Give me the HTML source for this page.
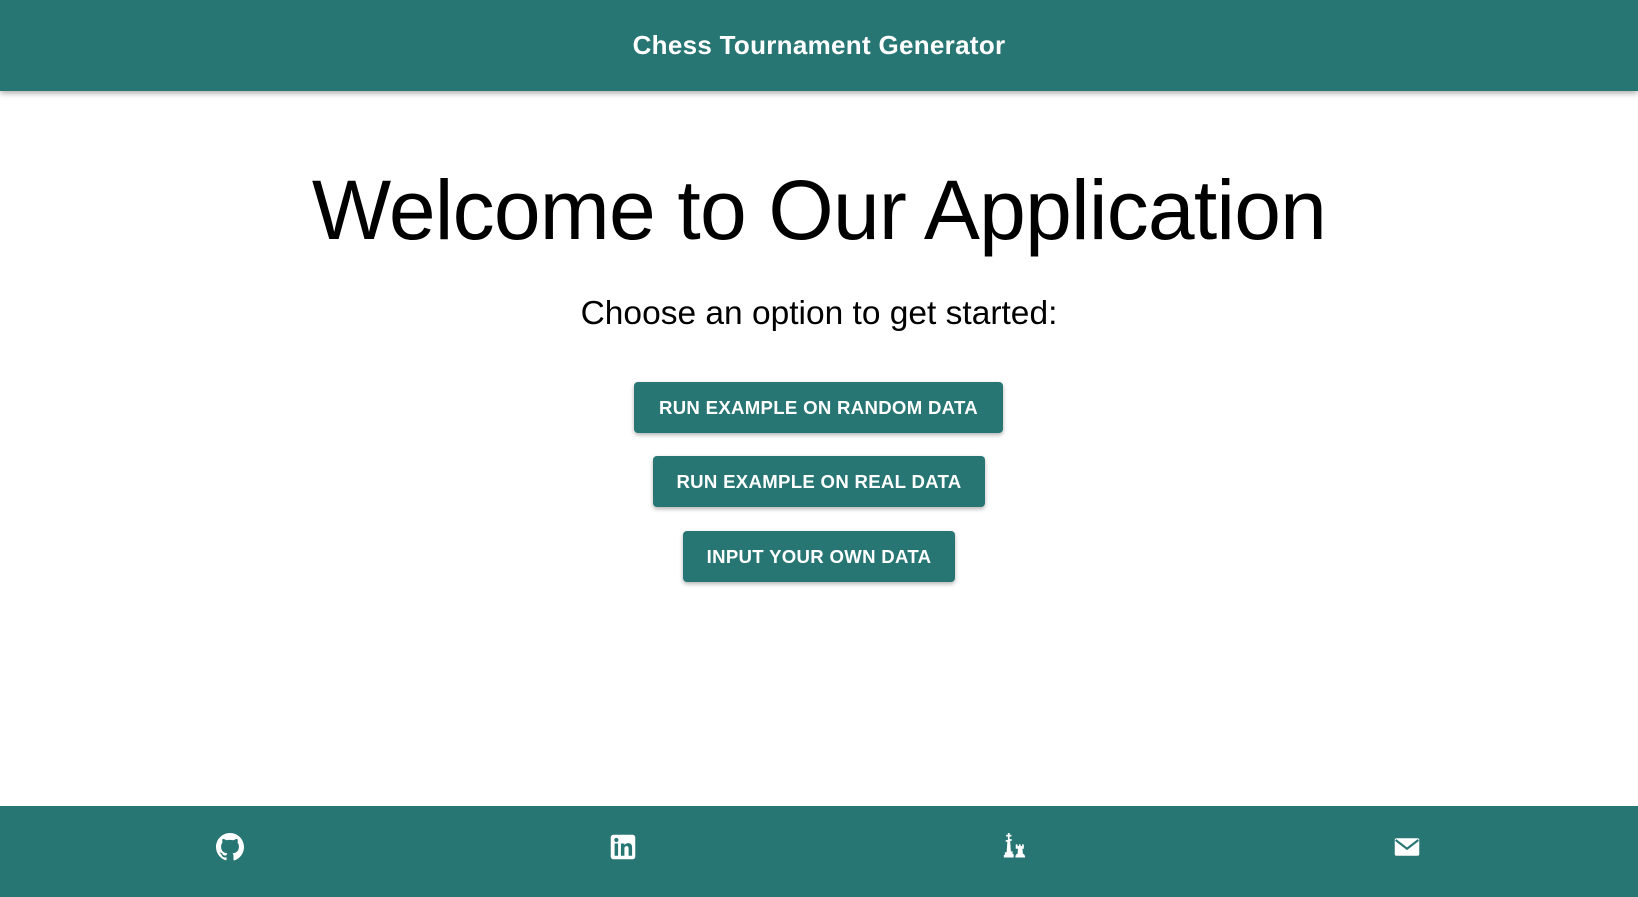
<!DOCTYPE html>
<html><head><meta charset="utf-8"><style>
body{margin:0;width:1638px;height:897px;position:relative;background:#fff;font-family:"Liberation Sans",sans-serif;overflow:hidden}
.hdr{position:absolute;left:0;top:0;width:1638px;height:91px;background:#277674;box-shadow:0 2px 6px rgba(0,0,0,.35);color:#fff;font-size:26px;font-weight:bold;text-align:center;line-height:91px;letter-spacing:.3px}
h1{position:absolute;left:0;width:1638px;top:160px;margin:0;text-align:center;font-weight:normal;font-size:84px;line-height:100px;color:#000;letter-spacing:-0.8px}
.sub{position:absolute;left:0;width:1638px;top:295px;text-align:center;font-size:33.5px;color:#000}
.btn{position:absolute;background:#277674;color:#fff;font-weight:bold;font-size:18.6px;text-align:center;border-radius:4px;box-shadow:0 2px 4px rgba(0,0,0,.3);height:51px;line-height:51px;letter-spacing:.3px}
.ftr{position:absolute;left:0;top:806px;width:1638px;height:91px;background:#277674}
.ic{position:absolute;top:833px;width:28px;height:28px}
</style></head><body>
<div class="hdr">Chess Tournament Generator</div>
<h1>Welcome to Our Application</h1>
<div class="sub">Choose an option to get started:</div>
<div class="btn" style="left:634px;top:382px;width:369px">RUN EXAMPLE ON RANDOM DATA</div>
<div class="btn" style="left:653px;top:456px;width:332px">RUN EXAMPLE ON REAL DATA</div>
<div class="btn" style="left:683px;top:531px;width:272px">INPUT YOUR OWN DATA</div>
<div class="ftr"></div>
<svg class="ic" style="left:216px" viewBox="0 0 16 16"><path fill="#fff" d="M8 0C3.58 0 0 3.580 0 8c0 3.54 2.29 6.53 5.47 7.59.4.07.55-.17.55-.38v-1.33c-2.230.48-2.7-1.07-2.7-1.07-.36-.92-.89-1.17-.89-1.17-.73-.5.05-.49.05-.49.8.06 1.23.83 1.23.83.72 1.22 1.870.87 2.33.66.07-.52.28-.87.5-1.07-1.78-.2-3.64-.89-3.64-3.95 0-.87.31-1.59.82-2.15-.08-.2-.36-1.020.08-2.12 0 0 .67-.21 2.2.82a7.6 7.6 0 014 0c1.53-1.04 2.2-.82 2.2-.82.44 1.1.16 1.92.08 2.12.51.56.82 1.27.82 2.15 0 3.07-1.87 3.75-3.65 3.95.29.25.54.73.54 1.48v2.2c0 .21.15.46.55.38A8 8 0 0016 8c0-4.42-3.58-8-8-8z"/></svg>
<svg class="ic" style="left:609px" viewBox="0 0 16 16"><rect x="1" y="1" width="14" height="14" rx="1.5" fill="#fff"/><rect x="3.2" y="6" width="2" height="7" fill="#277674"/><circle cx="4.2" cy="4" r="1.2" fill="#277674"/><path fill="#277674" d="M6.8 6h2v1c.4-.7 1.2-1.2 2.2-1.2 1.7 0 2.2 1.1 2.2 2.7V13h-2V9c0-.8-.2-1.5-1.1-1.5s-1.3.7-1.3 1.5v4h-2z"/></svg>
<svg class="ic" style="left:1000px" viewBox="0 0 16 16" fill="#fff"><path d="M4.5 0h1v1h1v1h-1v1.5h1.2v1H5.8l.4 6h1v1.5H7.8V14H2.2v-1.5h.6V11h1l.4-6H3.3V4h1.2V2h-1V1h1z"/><path d="M9 6.5h1v1h.8v-1h1v1h.8v-1h1V9h-.8l.3 3h.7v.8h.5V14H8.8v-1.2h.5V12h.7l.3-3H9z"/></svg>
<svg class="ic" style="left:1393px" viewBox="0 0 16 16"><rect x="1" y="3" width="14" height="10" rx="1" fill="#fff"/><path d="M1.5 4L8 9l6.5-5" stroke="#277674" stroke-width="1.2" fill="none"/></svg>
</body></html>
